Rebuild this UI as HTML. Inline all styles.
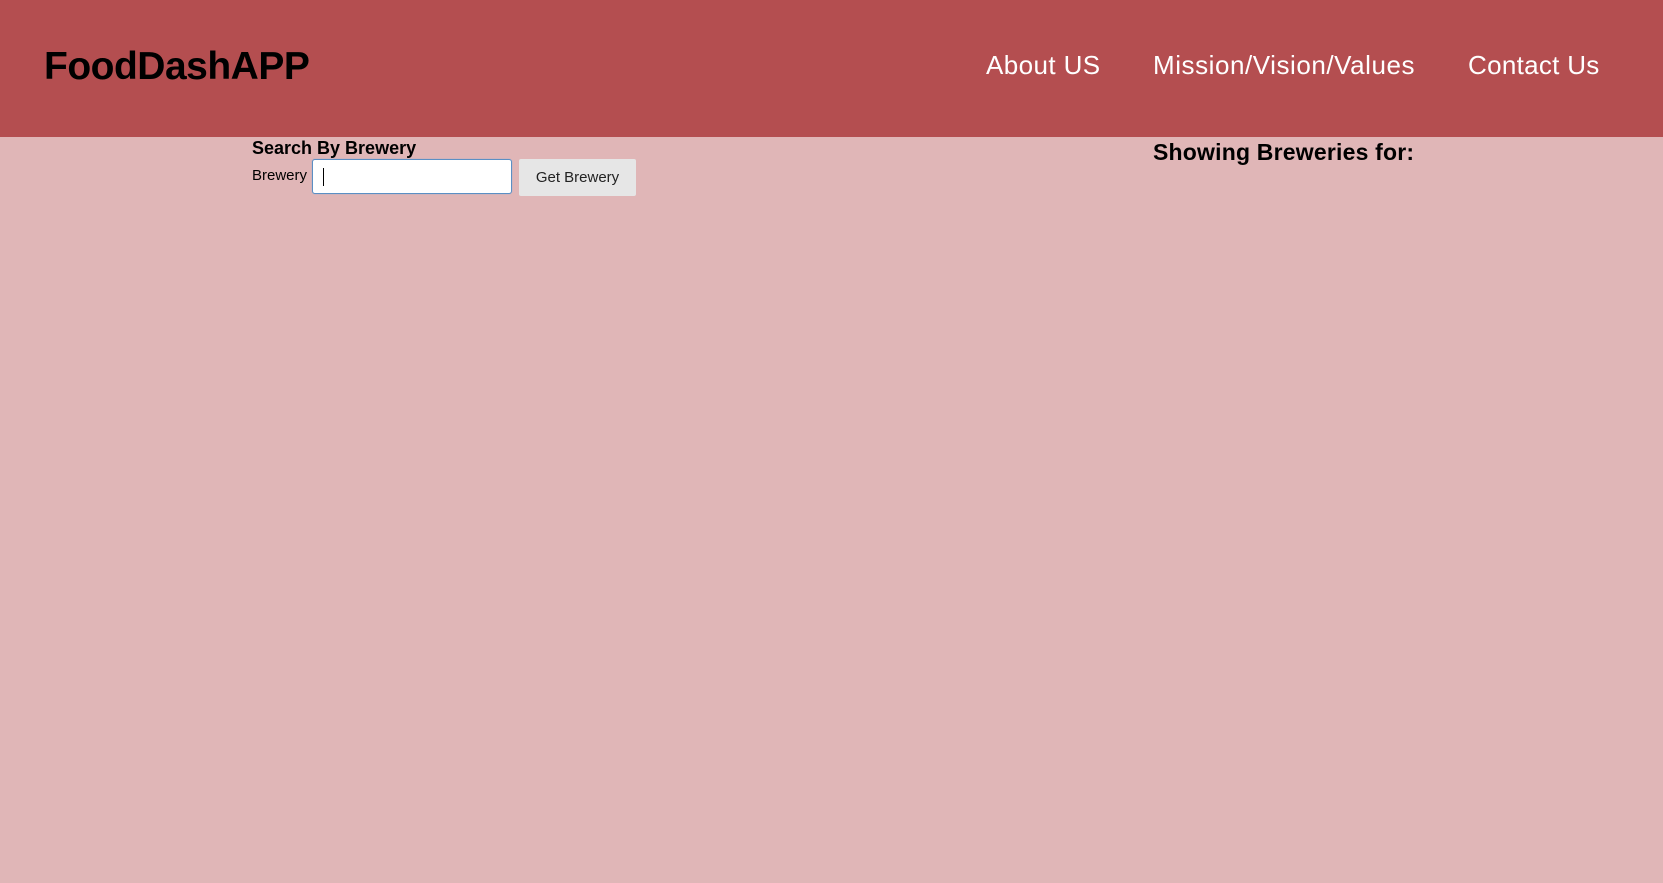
<!DOCTYPE html>
<html><head><meta charset="utf-8"><style>
html,body{margin:0;padding:0;width:1663px;height:883px;background:#e0b6b7;font-family:"Liberation Sans",sans-serif;overflow:hidden;position:relative}
.hdr{position:absolute;left:0;top:0;width:1663px;height:137px;background:#b44e50}
.abs{position:absolute;white-space:nowrap;line-height:1}
.logo{left:44px;top:47px;font-size:39px;font-weight:bold;color:#000;letter-spacing:-0.5px}
.nav{top:52px;font-size:26px;color:#fff}
.h{left:252px;top:139px;font-size:18px;font-weight:bold}
.lbl{left:252px;top:168px;font-size:15px}
.inp{position:absolute;left:312px;top:159px;width:200px;height:35px;box-sizing:border-box;background:#fff;border:1px solid #5b8fc4;border-radius:3px;box-shadow:0 0 1px #7aa7d8}
.caret{position:absolute;left:10px;top:8px;width:1px;height:18px;background:#000}
.btn{position:absolute;left:519px;top:159px;width:117px;height:37px;background:#e6e6e6;border-radius:2px;font-size:15px;text-align:center;line-height:37px;color:#222}
.sh{left:1153px;top:141px;font-size:23px;font-weight:bold;letter-spacing:0.2px}
</style></head><body>
<div class="hdr"></div>
<div class="abs logo">FoodDashAPP</div>
<div class="abs nav" style="left:986px;letter-spacing:0.4px">About US</div>
<div class="abs nav" style="left:1153px;letter-spacing:0.55px">Mission/Vision/Values</div>
<div class="abs nav" style="left:1468px;letter-spacing:0.3px">Contact Us</div>
<div class="abs h">Search By Brewery</div>
<div class="abs lbl">Brewery</div>
<div class="inp"><div class="caret"></div></div>
<div class="btn">Get Brewery</div>
<div class="abs sh">Showing Breweries for:</div>
</body></html>
